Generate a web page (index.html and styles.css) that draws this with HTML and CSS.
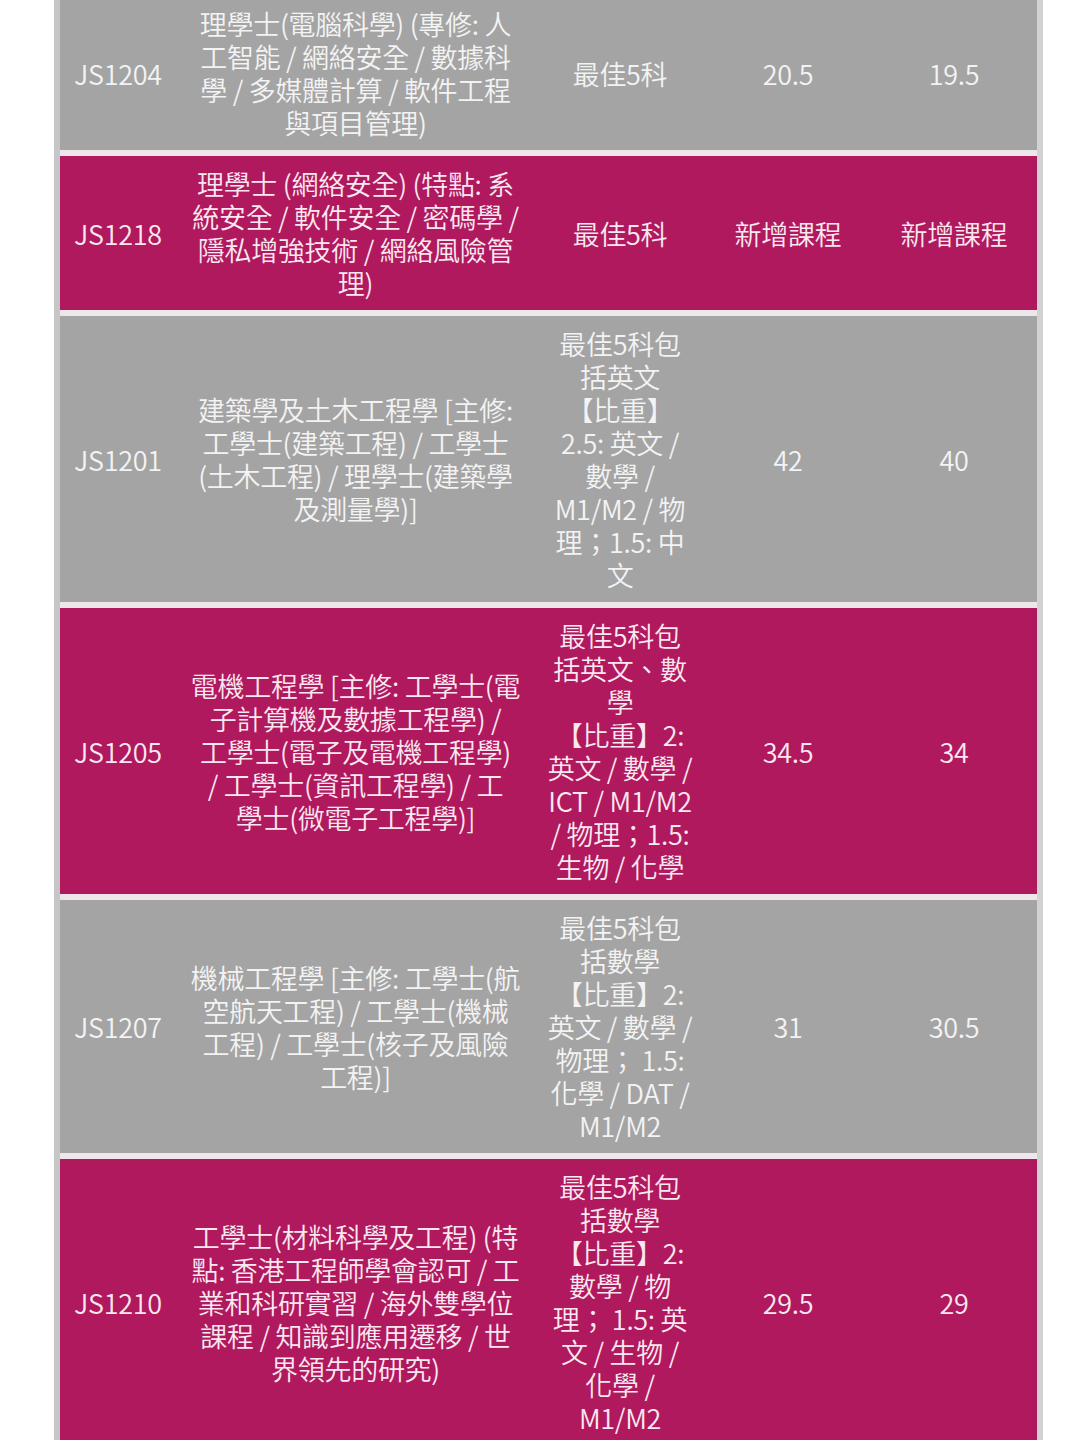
FILE: index.html
```html
<!DOCTYPE html>
<html lang="zh-Hant">
<head>
<meta charset="utf-8">
<title>JS courses</title>
<link rel="stylesheet" href="styles.css">
</head>
<body>
<div class="page">
<div class="table-wrap">
<table class="courses">
<colgroup>
<col class="c-code"><col class="c-name"><col class="c-req"><col class="c-a"><col class="c-b">
</colgroup>
<tbody>
<tr class="gray">
<td>JS1204</td>
<td>理學士(電腦科學) (專修: 人<br>工智能 / 網絡安全 / 數據科<br>學 / 多媒體計算 / 軟件工程<br>與項目管理)</td>
<td>最佳5科</td>
<td>20.5</td>
<td>19.5</td>
</tr>
<tr class="pink">
<td>JS1218</td>
<td>理學士 (網絡安全) (特點: 系<br>統安全 / 軟件安全 / 密碼學 /<br>隱私增強技術 / 網絡風險管<br>理)</td>
<td>最佳5科</td>
<td>新增課程</td>
<td>新增課程</td>
</tr>
<tr class="gray">
<td>JS1201</td>
<td>建築學及土木工程學 [主修:<br>工學士(建築工程) / 工學士<br>(土木工程) / 理學士(建築學<br>及測量學)]</td>
<td>最佳5科包<br>括英文<br>【比重】<br>2.5: 英文 /<br>數學 /<br>M1/M2 / 物<br>理；1.5: 中<br>文</td>
<td>42</td>
<td>40</td>
</tr>
<tr class="pink">
<td>JS1205</td>
<td>電機工程學 [主修: 工學士(電<br>子計算機及數據工程學) /<br>工學士(電子及電機工程學)<br>/ 工學士(資訊工程學) / 工<br>學士(微電子工程學)]</td>
<td>最佳5科包<br>括英文、數<br>學<br>【比重】2:<br>英文 / 數學 /<br>ICT / M1/M2<br>/ 物理；1.5:<br>生物 / 化學</td>
<td>34.5</td>
<td>34</td>
</tr>
<tr class="gray">
<td>JS1207</td>
<td>機械工程學 [主修: 工學士(航<br>空航天工程) / 工學士(機械<br>工程) / 工學士(核子及風險<br>工程)]</td>
<td>最佳5科包<br>括數學<br>【比重】2:<br>英文 / 數學 /<br>物理； 1.5:<br>化學 / DAT /<br>M1/M2</td>
<td>31</td>
<td>30.5</td>
</tr>
<tr class="pink">
<td>JS1210</td>
<td>工學士(材料科學及工程) (特<br>點: 香港工程師學會認可 / 工<br>業和科研實習 / 海外雙學位<br>課程 / 知識到應用遷移 / 世<br>界領先的研究)</td>
<td>最佳5科包<br>括數學<br>【比重】2:<br>數學 / 物<br>理； 1.5: 英<br>文 / 生物 /<br>化學 /<br>M1/M2</td>
<td>29.5</td>
<td>29</td>
</tr>
</tbody>
</table>
</div>
</div>
</body>
</html>
```
FILE: styles.css
```css
html, body {
  margin: 0;
  padding: 0;
  background: #ffffff;
  overflow: hidden;
}
body {
  font-family: "Noto Sans CJK TC", "Noto Sans", sans-serif;
}
.page {
  margin-top: -10px;
}
.table-wrap {
  margin-left: 54px;
  width: 977px;
  border-left: 6px solid #c6c6c6;
  border-right: 6px solid #d2d2d2;
  background: #ede6ea;
}
.courses {
  width: 100%;
  table-layout: fixed;
  border-collapse: separate;
  border-spacing: 0 6px;
}
.c-code { width: 116px; }
.c-name { width: 359px; }
.c-req { width: 170px; }
.c-a { width: 166px; }
.c-b { width: 166px; }
.courses td {
  padding: 11px 0;
  font-size: 27px;
  font-weight: 350;
  line-height: 33px;
  text-align: center;
  vertical-align: middle;
  white-space: nowrap;
  letter-spacing: -0.3px;
}
.gray td {
  background: #a4a4a4;
  color: #f3f3f3;
}
.pink td {
  background: #b0195e;
  color: #fae8f0;
}
```
